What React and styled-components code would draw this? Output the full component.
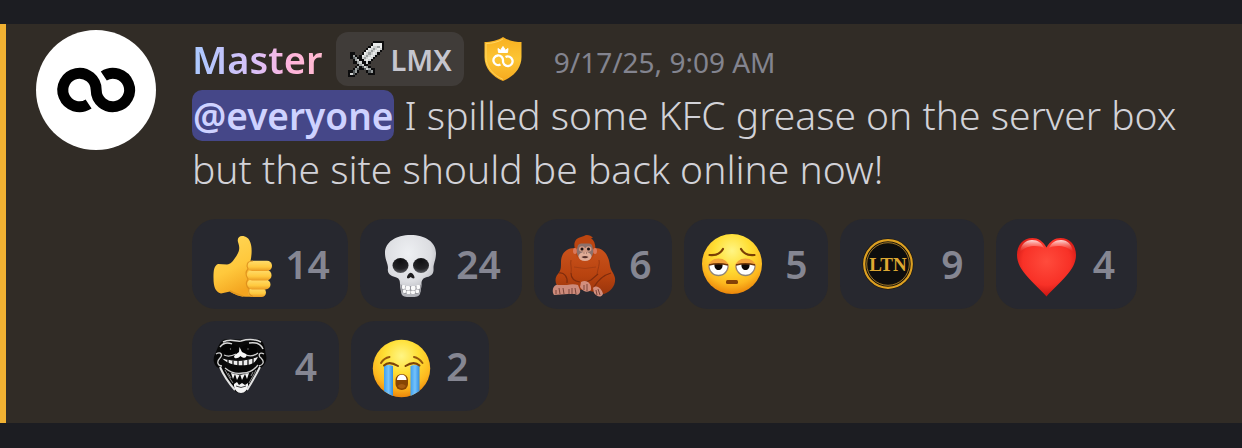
import styled, { createGlobalStyle } from "styled-components";

const GlobalStyle = createGlobalStyle`
  *, *::before, *::after {
    box-sizing: border-box;
  }

  body {
    margin: 0;
    background: #1c1d22;
    color: #d2d2d8;
    font-family: "Noto Sans", "Open Sans", sans-serif;
  }
`;

const Chat = styled.main`
  padding: 24px 0;
`;

const Message = styled.article`
  display: flex;
  gap: 36px;
  padding: 6px 48px 12px 30px;
  border-left: 6px solid #f0b132;
  background: #312c26;
`;

const Avatar = styled.svg`
  flex: none;
  width: 120px;
  height: 120px;
  border-radius: 50%;
  background: #fff;
`;

const Body = styled.div`
  flex: 1;
  min-width: 0;
`;

const Header = styled.header`
  display: flex;
  align-items: center;
  height: 58px;
`;

const Username = styled.h3`
  margin: 0 14px 0 0;
  font-size: 38px;
  font-weight: 600;
  line-height: 54px;
  color: transparent;
  background: linear-gradient(90deg, #a9c9ff, #dcc0f7 50%, #ffb4dc 75%, #ffbbd0);
  background-clip: text;
`;

const Tag = styled.button`
  display: flex;
  align-items: center;
  gap: 6px;
  height: 54px;
  padding: 0 12px;
  border: 0;
  border-radius: 12px;
  background: #403c39;
  color: #c5c5ce;
  font: 600 29px "Noto Sans", sans-serif;
`;

const Sword = styled.svg`
  width: 36px;
  height: 36px;
`;

const Shield = styled.svg`
  width: 38px;
  height: 44px;
  margin: 0 32px 0 20px;
`;

const Timestamp = styled.time`
  padding-top: 6px;
  font-size: 28px;
  color: #83848f;
`;

const Content = styled.p`
  margin: 0;
  font-size: 39px;
  font-weight: 300;
  line-height: 54px;
`;

const Mention = styled.span`
  padding: 0 1px;
  border-radius: 10px;
  background: #454788;
  color: #ced2ff;
  font-size: 37px;
  font-weight: 600;
  line-height: 1;
`;

const Reactions = styled.div`
  display: flex;
  flex-wrap: wrap;
  gap: 12px;
  margin-top: 23px;
`;

const Reaction = styled.button`
  display: flex;
  align-items: center;
  gap: ${(props) => (props.$custom ? 24 : 15)}px;
  height: 90px;
  padding: 0 21px 0 ${(props) => (props.$custom ? 18 : 21)}px;
  border: 0;
  border-radius: 24px;
  background: #27282f;
  color: #858692;
  font: 600 39px "Noto Sans", sans-serif;
`;

const Emoji = styled.svg`
  flex: none;
  width: 60px;
  height: 60px;
  overflow: visible;
`;

const Count = styled.span`
  display: flex;
  justify-content: center;
  width: ${(props) => props.$width}px;
  padding-bottom: 2px;
`;

const swordPixels = [
  "...........KKKKK",
  "..........KWWWWK",
  ".........KWLLGWK",
  "........KWLGLWLK",
  ".......KWLGLWLK.",
  ".KK...KWLGLWLK..",
  ".KGK.KWLGLWLK...",
  ".KDGKKLGLWLK....",
  "..KGLKKLWLK.....",
  "..KKGLKKLK......",
  "....KGLKK.......",
  "...KGKDLGK......",
  "..KGDKKDLGKK....",
  "KKDGK...KDGK....",
  "KLDK.....KKK....",
  "KKK.............",
];

const swordColors = {
  K: "#0c0c0d",
  W: "#e9ebeb",
  L: "#cfd1d1",
  G: "#9a9f9f",
  D: "#53585a",
};

const SwordIcon = () => (
  <Sword viewBox="0 0 16 16" shapeRendering="crispEdges" aria-hidden="true">
    {swordPixels.map((row, y) =>
      [...row].map(
        (c, x) =>
          swordColors[c] && (
            <rect
              key={`${x}-${y}`}
              x={x}
              y={y}
              width="1"
              height="1"
              fill={swordColors[c]}
            />
          )
      )
    )}
  </Sword>
);

const ShieldIcon = () => (
  <Shield viewBox="0 0 38 44" role="img" aria-label="Server role">
    <defs>
      <linearGradient id="shield" x1="0" y1="0" x2="0" y2="1">
        <stop offset="0" stopColor="#f8b01f" />
        <stop offset="0.5" stopColor="#fcc534" />
        <stop offset="1" stopColor="#f5a91f" />
      </linearGradient>
    </defs>
    <path
      d="M19 0C14 3.5 7 5 .5 5V20C.5 31 8 39.500 19 44 30 39.500 37.500 31 37.500 20V5C31 5 24 3.500 19 0Z"
      fill="url(#shield)"
    />
    <path
      d="M19 2C14.500 5 8 6.500 2 6.600V20C2 30 9 38 19 42.400"
      fill="none"
      stroke="#ffd560"
      strokeWidth="1"
    />
    <path
      d="M14.500 15.500 14 11.500 16.500 13.300 19 9.500 21.500 13.300 24 11.500 23.500 15.500Z"
      fill="#fff"
      stroke="#fff"
      strokeLinejoin="round"
    />
    <path
      d="M16.500 27.500A4.800 4.800 0 1 1 19 23.800A4.800 4.800 0 1 0 21.500 20"
      fill="none"
      stroke="#fff"
      strokeWidth="2.300"
    />
  </Shield>
);

const ThumbsUp = () => (
  <Emoji viewBox="0 0 60 60">
    <defs>
      <linearGradient id="thumb" x1="0" y1="0" x2="0.4" y2="1">
        <stop offset="0" stopColor="#ffd95b" />
        <stop offset="0.6" stopColor="#ffc83c" />
        <stop offset="1" stopColor="#f3a41f" />
      </linearGradient>
      <linearGradient id="finger" x1="0" y1="0" x2="0" y2="1">
        <stop offset="0" stopColor="#ffdc6b" />
        <stop offset="0.6" stopColor="#ffc93f" />
        <stop offset="1" stopColor="#e99a22" />
      </linearGradient>
    </defs>
    <path
      d="M29 2C26 2 24 4.500 25 8 27 14 27 17 22 24 19 28 18 30 14 30.500L5 30C1 32 .5 36 .5 44S2 58 8 59.500L17 57.500C22 61 27 62.800 33 62.800H45L48 30 37.500 27C39 20 39 13 37.500 9 36 4 33 2 29 2Z"
      fill="url(#thumb)"
    />
    <g fill="url(#finger)">
      <rect x="35" y="54" width="18" height="9" rx="4.500" />
      <rect x="34" y="45.500" width="23.500" height="10" rx="5" />
      <rect x="34" y="36" width="24.500" height="10.500" rx="5" />
      <rect x="34" y="26.800" width="25" height="10.200" rx="5" />
    </g>
    <path
      d="M40 27C34 27 33 31 35 35 32 38 33 42 35 45 33 48 33 52 36 55 35 58 36 61 40 62.500"
      fill="none"
      stroke="#d98b1a"
      strokeWidth="1.200"
      opacity="0.8"
    />
    <path
      d="M17 57C22 60 25 60 30 62"
      fill="none"
      stroke="#e0961f"
      strokeWidth="1.500"
    />
  </Emoji>
);

const Skull = () => (
  <Emoji viewBox="0 0 60 60">
    <defs>
      <radialGradient id="skull" cx="0.45" cy="0.3" r="0.75">
        <stop offset="0" stopColor="#eef0f3" />
        <stop offset="0.6" stopColor="#dcdde1" />
        <stop offset="1" stopColor="#a6a7ae" />
      </radialGradient>
      <radialGradient id="socket" cx="0.5" cy="0.2" r="0.9">
        <stop offset="0" stopColor="#101012" />
        <stop offset="0.6" stopColor="#232326" />
        <stop offset="1" stopColor="#707176" />
      </radialGradient>
    </defs>
    <path
      d="M29.700 1C15 1 4 8 4 19 4 26 7 29 7 34 6 39 9 42 14 43 18 44 19 46 19 50 19 54 20 57 20.500 60 21.500 62.500 24 63 29.700 63S38 62.500 39 60C39.500 57 40.500 54 40.500 50 40.500 46 42 44 46 43 51 42 53 39 52.500 34 52.500 29 55 26 55 19 55 8 44 1 29.700 1Z"
      fill="url(#skull)"
    />
    <ellipse cx="19.500" cy="31.500" rx="8" ry="7.500" fill="url(#socket)" />
    <ellipse cx="40" cy="31.500" rx="8" ry="7.500" fill="url(#socket)" />
    <path
      d="M29.700 38.800C28 38.800 26 42 26 43.500S28.500 44.500 29.700 43C31 44.500 33.500 45 33.500 43.500S31.500 38.800 29.700 38.800Z"
      fill="#1d1c1e"
    />
    <path d="M19.500 50 22 52H38L40.500 50 39.500 58 36 60H24L20.500 58Z" fill="#98989e" />
    <g fill="#fafafa">
      <rect x="21" y="51" width="3" height="4" rx="1" />
      <rect x="24.500" y="52" width="4.500" height="4" rx="1" />
      <rect x="30" y="52" width="4.500" height="4" rx="1" />
      <rect x="35.500" y="51" width="3.500" height="4" rx="1" />
      <rect x="22" y="55.500" width="3" height="3.500" rx="1" />
      <rect x="25.500" y="56.500" width="4" height="3.500" rx="1" />
      <rect x="30" y="56.500" width="4" height="3.500" rx="1" />
      <rect x="34.500" y="55.500" width="3.500" height="3.500" rx="1" />
    </g>
  </Emoji>
);

const Orangutan = () => (
  <Emoji viewBox="0 0 60 60">
    <defs>
      <linearGradient id="fur" x1="0" y1="0" x2="0" y2="1">
        <stop offset="0" stopColor="#c9521c" />
        <stop offset="0.6" stopColor="#b8430f" />
        <stop offset="1" stopColor="#9a350c" />
      </linearGradient>
    </defs>
    <path
      d="M20 14C10 14 6 21 6 28 6 34 6 36 3 40 -1 44 0 52 5 54L30 56 49 60C56 58 61 51 60 44 59 39 56 37 55 32 54 23 50 14 40 14Z"
      fill="url(#fur)"
    />
    <path
      d="M16 26C15 30 17 34 16 39M44 26C45 30 43 34 42 40"
      fill="none"
      stroke="#9c3911"
      strokeWidth="1"
    />
    <path d="M19 33Q30 36 41 33" fill="none" stroke="#a63e12" strokeWidth="1" />
    <path
      d="M16 39C16 44 18 47 25 48M4 39C9 38 13 43 12 49M26 50 36 46 43 40M56 39C49 41 43 46 39 53"
      fill="none"
      stroke="#7f2c0d"
      strokeWidth="1.200"
    />
    <path
      d="M20 15C18 8 21 4 26 3L29 2C31 0 36 1 38 4L36 4C40 7 41 12 40 18 38 25 36 27 30 27S20 22 20 15Z"
      fill="#bb4510"
    />
    <ellipse cx="20" cy="17" rx="2" ry="3" fill="#d9785a" />
    <ellipse cx="40" cy="17" rx="2" ry="3" fill="#d9785a" />
    <path
      d="M22.500 13C23 9 27 9.500 30 9.500 34 9.500 37 9 37.500 13 39 18 38 22 35 24H25C22 22 21 18 22.500 13Z"
      fill="#8b706a"
    />
    <ellipse cx="27" cy="15" rx="3" ry="2.800" fill="#d29a84" />
    <ellipse cx="33.500" cy="15" rx="3" ry="2.800" fill="#d29a84" />
    <path d="M28.500 14H32L33 21H27.500Z" fill="#d29a84" />
    <ellipse cx="30" cy="22.500" rx="6.500" ry="4.500" fill="#dfac97" />
    <circle cx="27" cy="15" r="1.500" fill="#171112" />
    <circle cx="33.500" cy="15" r="1.500" fill="#171112" />
    <path d="M26.500 23Q30 21 33.500 23Q30 25.500 26.500 23Z" fill="#57302b" />
    <path d="M28.500 19H29.500M31 19H32" stroke="#7c5147" />
    <path
      d="M-2 59C-3 54 0 50 3 51L12 51C16 50 20 50 23 51L25 56C26 60 22 62 20 60L13 60-1 61Z"
      fill="#cc8a7a"
    />
    <path
      d="M26 48C32 45 37 50 36 56 33 59 28 58 25 53ZM38 54C42 50 47 55 48 60 46 64 42 63 39 59Z"
      fill="#d28e7d"
    />
    <path
      d="M1 56V60M4 54 5 60M8 54 9 60M14 55V60M17 54V60M20 54 21 60M29 51 29 56M32 50V57M41 56 42 61M43 55 45 61"
      stroke="#7a453a"
      strokeWidth="1"
    />
  </Emoji>
);

const FaceGradient = ({ id }) => (
  <radialGradient id={id} cx="0.5" cy="0.28" r="0.74">
    <stop offset="0" stopColor="#fff584" />
    <stop offset="0.4" stopColor="#ffdf35" />
    <stop offset="0.75" stopColor="#fdb81f" />
    <stop offset="1" stopColor="#e98008" />
  </radialGradient>
);

const TiredFace = () => (
  <Emoji viewBox="0 0 60 60">
    <defs>
      <FaceGradient id="tired" />
    </defs>
    <circle cx="30" cy="30" r="30" fill="url(#tired)" />
    {[16.5, 43.5].map((x) => (
      <g key={x}>
        <ellipse cx={x} cy="33" rx="10.500" ry="8.500" fill="#f2a13a" />
        <path
          d={`M${x - 10} 31Q${x} 28 ${x + 10} 31C${x + 10} 46 ${x - 10} 46 ${x - 10} 31Z`}
          fill="#8d8579"
        />
        <path
          d={`M${x - 9} 31Q${x} 29 ${x + 9} 31C${x + 9} 44 ${x - 9} 44 ${x - 9} 31Z`}
          fill="#fff"
        />
        <path
          d={`M${x - 4} 30H${x + 4}C${x + 5} 38 ${x - 5} 38 ${x - 4} 30Z`}
          fill="#0b0707"
        />
        <path
          d={`M${x - 9.5} 31Q${x} 28.500 ${x + 9.5} 31`}
          fill="none"
          stroke="#6b3308"
          strokeWidth="1.500"
        />
      </g>
    ))}
    <path
      d="M7.500 21Q17 22 21 15M52.500 21Q43 22 39 15"
      fill="none"
      stroke="#7a3f05"
      strokeWidth="2.200"
      strokeLinecap="round"
    />
    <rect x="24" y="46" width="12" height="4" rx="1.500" fill="#854107" />
  </Emoji>
);

const LtnLogo = () => (
  <Emoji viewBox="0 0 60 60">
    <circle cx="30" cy="30" r="25.500" fill="#19150d" />
    <circle cx="30" cy="30" r="23.800" fill="none" stroke="#dda022" strokeWidth="2.200" />
    <circle cx="30" cy="30" r="21.300" fill="#0d0d0d" stroke="#9c7425" strokeWidth="1" />
    <text
      x="30"
      y="37"
      textAnchor="middle"
      fontFamily="Liberation Serif"
      fontWeight="700"
      fontSize="19"
      fill="#dda832"
    >
      LTN
    </text>
  </Emoji>
);

const Heart = () => (
  <Emoji viewBox="0 0 60 60">
    <defs>
      <radialGradient id="heart" cx="0.5" cy="0.4" r="0.62">
        <stop offset="0" stopColor="#ff4b3c" />
        <stop offset="0.65" stopColor="#f83127" />
        <stop offset="1" stopColor="#c4120f" />
      </radialGradient>
      <linearGradient id="shine" x1="0" y1="0" x2="0" y2="1">
        <stop offset="0" stopColor="#fff" stopOpacity="0.85" />
        <stop offset="1" stopColor="#ff6a5a" stopOpacity="0" />
      </linearGradient>
    </defs>
    <path
      d="M29.500 13.500C26 7 21 4 15.500 4 6 4 0 11 0 21 0 37 17 48 29.500 62.500 42 48 59 37 59 21 59 11 53 4 43.500 4 38 4 33 7 29.500 13.500Z"
      fill="url(#heart)"
    />
    <path
      d="M3 18C4 10 9 6 15 6S25 9 27 14C21 11 10 11 3 18ZM32 14C34 9 38 6 44 6S55 10 56 18C49 11 38 11 32 14Z"
      fill="url(#shine)"
    />
  </Emoji>
);

const Troll = () => (
  <Emoji viewBox="0 0 60 60">
    <path
      d="M14 3.500H50C54 6 55 12 55.500 17 58 24 55 29 50 33L46 40 38 53C36 57.500 27 58 25 55L17 44 10 33C4 30 2 24 5 18 7 15 8 7 14 3.500Z"
      fill="#080808"
    />
    <path
      d="M13 6C20 2 26 6 31 5 38 3 45 3 51 6M10 11C13 7 17 6 22 8M39 7C46 6 51 8 53 13"
      fill="none"
      stroke="#d8d8d8"
      strokeWidth="1.500"
    />
    <path
      d="M6 18C11 15 13 19 10 22 6 26 8 30 12 30M54 18C49 15 48 20 51 22 55 26 53 29 49 30M14 19C18 21 22 20 26 18M34 18C39 21 44 20 48 17M15 32C21 37 28 38 33 37 39 37 44 34 48 29"
      fill="none"
      stroke="#cfcfcf"
      strokeWidth="1.300"
    />
    <path
      d="M10 31C13 38 18 46 25 54M50 31C46 39 42 46 37 54"
      fill="none"
      stroke="#e2e2e2"
      strokeWidth="2"
    />
    <path
      d="M15 34C18 39 20 43 23 47M46 34C44 39 41 43 39 47M18 37 21 42M43 36 41 40"
      fill="none"
      stroke="#8f8f8f"
      strokeWidth="1"
    />
    <ellipse cx="20" cy="13.500" rx="8.500" ry="5" fill="#030303" />
    <ellipse cx="39" cy="13.500" rx="8" ry="5" fill="#030303" />
    <circle cx="20.500" cy="13" r="0.700" fill="#888" />
    <circle cx="38" cy="13" r="0.700" fill="#888" />
    <path
      d="M29 16 29.500 11 32 16 36 18C38 22 33 23 30.500 20 27 24 22 22 25 19Z"
      fill="#f8f8f8"
    />
    <path
      d="M12 22C22 26 38 26 48 20 47 25 43 28 37 29 29 30 18 29 12 22Z"
      fill="#ededed"
    />
    <path
      d="M12 22C22 25 38 25 48 20M18 24V29M23 24V30M28 24V30M33 24V30M38 23V29M43 22V28"
      fill="none"
      stroke="#111"
      strokeWidth="1.300"
    />
    <path d="M21 37 23 43 25 38 27 44 30 38 32 44 35 38 37 43 39 37 30 39Z" fill="#f2f2f2" />
    <path
      d="M24 48 27 46 29 49 32 47 35 49 38 47 38 50C37 54 35 57 31 57S25 54 24 50Z"
      fill="#f4f4f4"
    />
    <path
      d="M26 50Q31 53 36 50"
      fill="none"
      stroke="#333"
      strokeWidth="0.900"
    />
  </Emoji>
);

const CryingFace = () => (
  <Emoji viewBox="0 0 60 60">
    <defs>
      <FaceGradient id="crying" />
      <linearGradient id="tear" x1="0" y1="0" x2="1" y2="0">
        <stop offset="0" stopColor="#3fa0ee" />
        <stop offset="0.5" stopColor="#74c2fb" />
        <stop offset="1" stopColor="#2f8de0" />
      </linearGradient>
    </defs>
    <circle cx="29.500" cy="32.500" r="28.700" fill="url(#crying)" />
    <g fill="url(#tear)">
      <path d="M12 30Q16 28 21 30V60Q16 58 12 55Z" />
      <path d="M38.500 30Q43 28 47.500 30V55Q43 58 38.500 60Z" />
    </g>
    <path
      d="M12 29.500Q17 24.500 26 30M47.500 29.500Q42 24.500 33.500 30"
      fill="none"
      stroke="#7d4307"
      strokeWidth="2"
      strokeLinecap="round"
    />
    <path
      d="M9 27Q12 22 17.500 21M50.500 27Q47 22 42 21"
      fill="none"
      stroke="#94560c"
      strokeWidth="2"
      strokeLinecap="round"
    />
    <rect x="23.500" y="38" width="12.500" height="16" rx="6" fill="#874503" />
    <path d="M25 44C25 37 34.500 37 34.500 44Z" fill="#fff" />
    <path d="M25.500 50Q29.800 46 34 50Q30 55 25.500 50Z" fill="#a55b10" />
  </Emoji>
);

const reactions = [
  { name: "thumbsup", icon: ThumbsUp, count: 14, width: 39 },
  { name: "skull", icon: Skull, count: 24, width: 45 },
  { name: "orangutan", icon: Orangutan, count: 6, width: 21 },
  { name: "tired", icon: TiredFace, count: 5, width: 21, custom: true },
  { name: "ltn", icon: LtnLogo, count: 9, width: 21, custom: true },
  { name: "heart", icon: Heart, count: 4, width: 24 },
  { name: "troll", icon: Troll, count: 4, width: 24, custom: true },
  { name: "sob", icon: CryingFace, count: 2, width: 21 },
];

const App = () => {
  return (
    <>
      <GlobalStyle />
      <Chat>
        <Message>
          <Avatar viewBox="0 0 120 120" role="img" aria-label="Master">
            <path
              d="M52.600 74A16.700 16.700 0 1 1 60.200 60A16.700 16.700 0 1 0 67.800 46"
              fill="none"
              stroke="#000"
              strokeWidth="11"
            />
          </Avatar>
          <Body>
            <Header>
              <Username>Master</Username>
              <Tag>
                <SwordIcon />
                LMX
              </Tag>
              <ShieldIcon />
              <Timestamp dateTime="2025-09-17T09:09">9/17/25, 9:09 AM</Timestamp>
            </Header>
            <Content>
              <Mention>@everyone</Mention> I spilled some KFC grease on the
              server box but the site should be back online now!
            </Content>
            <Reactions>
              {reactions.map(({ name, icon: Icon, count, width, custom }) => (
                <Reaction key={name} $custom={custom} aria-label={`${name} ${count}`}>
                  <Icon />
                  <Count $width={width}>{count}</Count>
                </Reaction>
              ))}
            </Reactions>
          </Body>
        </Message>
      </Chat>
    </>
  );
};

export default App;
